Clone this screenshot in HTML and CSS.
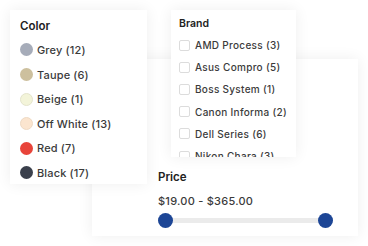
FILE: index.html
```html
<!DOCTYPE html>
<html lang="en">
<head>
  <meta charset="UTF-8" />
  <meta name="viewport" content="width=device-width, initial-scale=1.0"/>
  <title>Filters</title>
  <link rel="stylesheet" href="styles.css">
</head>
<body>
  <div class="stage">
    <div class="card price-box">
      <h3 class="price-title">Price</h3>
      <div class="price-range">$19.00 - $365.00</div>
      <div class="slider">
        <span class="handle"></span>
        <span class="handle"></span>
      </div>
    </div>

    <div class="card color-box">
      <h3 class="color-title">Color</h3>
      <ul class="color-list">
        <li><span class="swatch grey"></span>Grey (12)</li>
        <li><span class="swatch taupe"></span>Taupe (6)</li>
        <li><span class="swatch beige"></span>Beige (1)</li>
        <li><span class="swatch offwhite"></span>Off White (13)</li>
        <li><span class="swatch red"></span>Red (7)</li>
        <li><span class="swatch black"></span>Black (17)</li>
      </ul>
    </div>

    <div class="card brand-box">
      <h3 class="brand-title">Brand</h3>
      <ul class="brand-list">
        <li><span class="check"></span>AMD Process (3)</li>
        <li><span class="check"></span>Asus Compro (5)</li>
        <li><span class="check"></span>Boss System (1)</li>
        <li><span class="check"></span>Canon Informa (2)</li>
        <li><span class="check"></span>Dell Series (6)</li>
        <li><span class="check"></span>Nikon Chara (3)</li>
      </ul>
    </div>
  </div>
</body>
</html>
```

FILE: styles.css
```css
body {
  margin: 0;
  padding: 0;
  background-color: #fff;
  font-family: Inter, "Open Sans", sans-serif;
  color: #3b3b3b;
}
.stage {
  position: relative;
  width: 368px;
  height: 246px;
  overflow: hidden;
}
.card {
  background-color: #fff;
  box-shadow: 0 0 14px rgba(0, 0, 0, 0.07);
  box-sizing: border-box;
}
h3 {
  margin: 0;
  font-weight: 600;
  color: #222;
}
ul {
  list-style: none;
  margin: 0;
  padding: 0;
}

/* price */
.price-box {
  margin: 59px 0 0 92px;
  width: 266px;
  height: 177px;
  padding: 110px 0 0 66px;
}
.price-title {
  font-size: 11.5px;
  line-height: 16px;
}
.price-range {
  margin-top: 8px;
  font-size: 11px;
  line-height: 16px;
  font-weight: 500;
  letter-spacing: 0.25px;
}
.slider {
  margin-top: 4px;
  width: 175px;
  height: 15px;
  display: flex;
  justify-content: space-between;
  align-items: center;
  background: linear-gradient(#ebebeb, #ebebeb) center / 100% 5px no-repeat;
}
.handle {
  width: 15px;
  height: 15px;
  border-radius: 50%;
  background-color: #1d4696;
}

/* color */
.color-box {
  position: absolute;
  left: 10px;
  top: 10px;
  width: 137px;
  height: 174px;
  padding: 8px 0 0 10px;
}
.color-title {
  font-size: 11.5px;
  line-height: 16px;
  margin-bottom: 3.7px;
}
.color-list li {
  display: flex;
  align-items: center;
  gap: 4px;
  height: 24.6px;
  font-size: 11px;
  font-weight: 500;
  letter-spacing: 0.15px;
}
.swatch {
  width: 13px;
  height: 13px;
  border-radius: 50%;
  box-sizing: border-box;
}
.grey { background-color: #a6acb9; }
.taupe { background-color: #cdc09e; }
.beige { background-color: #f3f4d9; border: 1px solid #e4e4cc; }
.offwhite { background-color: #fbe5cf; border: 1px solid #eedac4; }
.red { background-color: #e8443a; }
.black { background-color: #3a404c; }

/* brand */
.brand-box {
  position: absolute;
  left: 171px;
  top: 10px;
  width: 125px;
  height: 147px;
  padding: 7px 0 0 8px;
  overflow: hidden;
}
.brand-title {
  font-size: 10.5px;
  line-height: 14px;
  margin-bottom: 3px;
}
.brand-list li {
  display: flex;
  align-items: center;
  gap: 5px;
  height: 22.2px;
  font-size: 10px;
  font-weight: 500;
  letter-spacing: 0.3px;
  white-space: nowrap;
}
.check {
  width: 11px;
  height: 11px;
  border: 1px solid #dcdcdc;
  border-radius: 2px;
  box-sizing: border-box;
}
```
